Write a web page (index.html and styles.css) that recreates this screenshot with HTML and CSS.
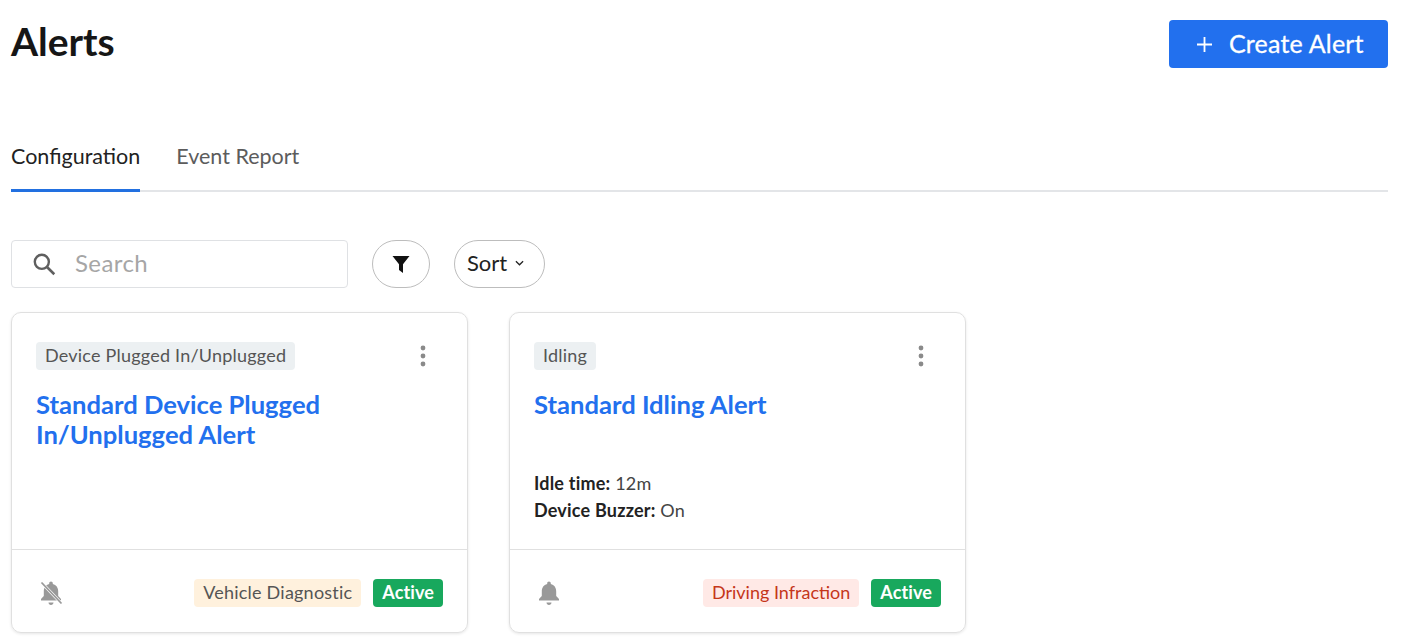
FILE: index.html
```html
<!DOCTYPE html>
<html lang="en">
<head>
<meta charset="utf-8">
<title>Alerts</title>
<link rel="stylesheet" href="styles.css">
</head>
<body>
<main class="page">
  <header class="page-head">
    <h1 class="page-title">Alerts</h1>
    <button class="create-btn" type="button">
      <svg class="plus" viewBox="0 0 14 14" width="15" height="15"><path d="M7 0v14M0 7h14" stroke="#fff" stroke-width="1.700" fill="none"/></svg>
      <span class="create-label">Create Alert</span>
    </button>
  </header>
  <nav class="tabs">
    <a class="tab tab-active">Configuration</a>
    <a class="tab">Event Report</a>
  </nav>
  <div class="toolbar">
    <label class="search">
      <svg viewBox="0 0 24 24" width="26" height="26"><circle cx="10" cy="10" r="6.500" stroke="#5f5f5f" stroke-width="2.200" fill="none"/><path d="M15 15l6.500 6.500" stroke="#5f5f5f" stroke-width="2.400" fill="none"/></svg>
      <span class="search-text">Search</span>
    </label>
    <button class="pill pill-filter" type="button" aria-label="Filter">
      <svg viewBox="0 0 18 18" width="18" height="18"><path d="M0.500 1h17L11 9.200V18l-4-3V9.200z" fill="#111"/></svg>
    </button>
    <button class="pill pill-sort" type="button">
      <span>Sort</span>
      <svg viewBox="0 0 10 6" width="9" height="6"><path d="M1 1l4 4 4-4" stroke="#222" stroke-width="1.400" fill="none"/></svg>
    </button>
  </div>
  <section class="cards">
    <article class="card">
      <div class="card-body">
        <div class="card-top">
          <span class="tag tag-grey">Device Plugged In/Unplugged</span>
          <svg class="kebab" viewBox="0 0 6 22" width="6" height="22"><circle cx="3" cy="3" r="2.400" fill="#8a8a8a"/><circle cx="3" cy="11" r="2.400" fill="#8a8a8a"/><circle cx="3" cy="19" r="2.400" fill="#8a8a8a"/></svg>
        </div>
        <h2 class="card-title">Standard Device Plugged In/Unplugged Alert</h2>
      </div>
      <footer class="card-foot">
        <svg class="bell" viewBox="0 0 24 26" width="24" height="26"><path d="M12 1.500c1 0 1.800.8 1.800 1.800v.8c3.400.8 5.400 3.700 5.400 7.400v4.500l2.800 3v1.500H2V19l2.800-3v-4.500c0-3.700 2-6.600 5.400-7.400v-.8c0-1 .8-1.800 1.800-1.800zM9.500 22.500h5c0 1.500-1.100 2.500-2.500 2.500s-2.500-1-2.500-2.500z" fill="#999"/><path d="M2 2l21 22" stroke="#fff" stroke-width="3"/><path d="M2.500 2.500l20 21" stroke="#999" stroke-width="1.800"/></svg>
        <div class="foot-tags">
          <span class="tag tag-amber">Vehicle Diagnostic</span>
          <span class="tag tag-green">Active</span>
        </div>
      </footer>
    </article>
    <article class="card">
      <div class="card-body">
        <div class="card-top">
          <span class="tag tag-grey">Idling</span>
          <svg class="kebab" viewBox="0 0 6 22" width="6" height="22"><circle cx="3" cy="3" r="2.400" fill="#8a8a8a"/><circle cx="3" cy="11" r="2.400" fill="#8a8a8a"/><circle cx="3" cy="19" r="2.400" fill="#8a8a8a"/></svg>
        </div>
        <h2 class="card-title">Standard Idling Alert</h2>
        <dl class="facts">
          <div class="fact"><dt>Idle time:</dt> <dd>12m</dd></div>
          <div class="fact"><dt>Device Buzzer:</dt> <dd>On</dd></div>
        </dl>
      </div>
      <footer class="card-foot">
        <svg class="bell" viewBox="0 0 24 26" width="24" height="26"><path d="M12 1.500c1 0 1.800.8 1.800 1.800v.8c3.400.8 5.400 3.700 5.400 7.400v4.500l2.800 3v1.500H2V19l2.800-3v-4.500c0-3.700 2-6.600 5.400-7.400v-.8c0-1 .8-1.800 1.800-1.800zM9.500 22.500h5c0 1.500-1.100 2.500-2.500 2.500s-2.500-1-2.500-2.500z" fill="#999"/></svg>
        <div class="foot-tags">
          <span class="tag tag-red">Driving Infraction</span>
          <span class="tag tag-green">Active</span>
        </div>
      </footer>
    </article>
  </section>
</main>
</body>
</html>
```
FILE: styles.css
```css
* { box-sizing: border-box; }
html, body { margin: 0; padding: 0; background: #fff; }
body { font-family: "Lato", "Open Sans", sans-serif; color: #222; overflow: hidden; height: 643px; }
.page { padding: 20px 15px 0 11px; }
.page-head { display: flex; justify-content: space-between; align-items: flex-start; height: 48px; }
.page-title { margin: -1px 0 0; font-family: "Lato", sans-serif; font-weight: 700; font-size: 39px; line-height: 44px; color: #161616; }
.create-btn { width: 219px; height: 48px; display: flex; align-items: center; justify-content: flex-start; gap: 17px; padding: 0 0 0 28px; border: 0; border-radius: 4px; background: #2270ee; color: #fff; font-family: inherit; font-size: 25px; letter-spacing: .2px; -webkit-text-stroke: .3px #fff; }
.create-label { padding-bottom: 3px; }
.plus { flex: none; }
.tabs { display: flex; gap: 36px; margin-top: 64px; border-bottom: 2px solid #e3e5e8; height: 60px; }
.tab { display: block; height: 60px; padding-top: 10px; line-height: 28px; font-size: 21.5px; color: #5c5c5c; }
.tab-active { color: #222; border-bottom: 3px solid #2270e0; }
.toolbar { display: flex; align-items: center; margin-top: 48px; height: 48px; }
.search { width: 337px; height: 48px; display: flex; align-items: center; gap: 18px; padding-left: 19px; border: 1px solid #dfe1e4; border-radius: 4px; }
.search-text { font-size: 24px; letter-spacing: .4px; color: #a6a6a6; padding-bottom: 3px; }
.pill { height: 48px; display: flex; align-items: center; justify-content: center; background: #fff; border: 1px solid #bdbdbd; border-radius: 24px; font-family: inherit; color: #222; padding: 0; }
.pill-filter { width: 58px; margin-left: 24px; }
.pill-sort { width: 91px; margin-left: 24px; gap: 8px; font-size: 22px; padding: 0 8px 3px 0; }
.cards { display: flex; gap: 41px; margin-top: 24px; }
.card { width: 457px; height: 321px; display: flex; flex-direction: column; border: 1px solid #e0e0e0; border-radius: 10px; box-shadow: 0 1px 3px rgba(0,0,0,.1); }
.card-body { height: 236px; padding: 29px 24px 0; display: flex; flex-direction: column; }
.card-top { display: flex; justify-content: space-between; align-items: center; height: 28px; padding-right: 17px; }
.kebab { flex: none; }
.tag { display: inline-block; height: 28px; line-height: 26px; padding: 0 9px; border-radius: 4px; font-size: 18px; letter-spacing: .22px; white-space: nowrap; }
.tag-grey { background: #ecf0f2; color: #555; }
.tag-amber { background: #fff1dd; color: #555; }
.tag-red { background: #ffe9e6; color: #c5361a; letter-spacing: 0; }
.tag-green { background: #18a85d; color: #fff; font-weight: 700; letter-spacing: .1px; }
.card-title { margin: 19px 0 0; width: 330px; font-family: "Lato", sans-serif; font-weight: 700; font-size: 25.6px; line-height: 30px; color: #2270ee; }
.facts { margin: 51px 0 0; font-size: 18px; letter-spacing: .2px; line-height: 27px; }
.fact { display: block; }
.fact dt { display: inline; font-weight: 700; color: #222; }
.fact dd { display: inline; margin: 0; color: #444; }
.card-foot { flex: 1; display: flex; justify-content: space-between; align-items: center; padding: 4px 24px 0 27px; border-top: 1px solid #e0e0e0; }
.foot-tags { display: flex; gap: 12px; }
```
